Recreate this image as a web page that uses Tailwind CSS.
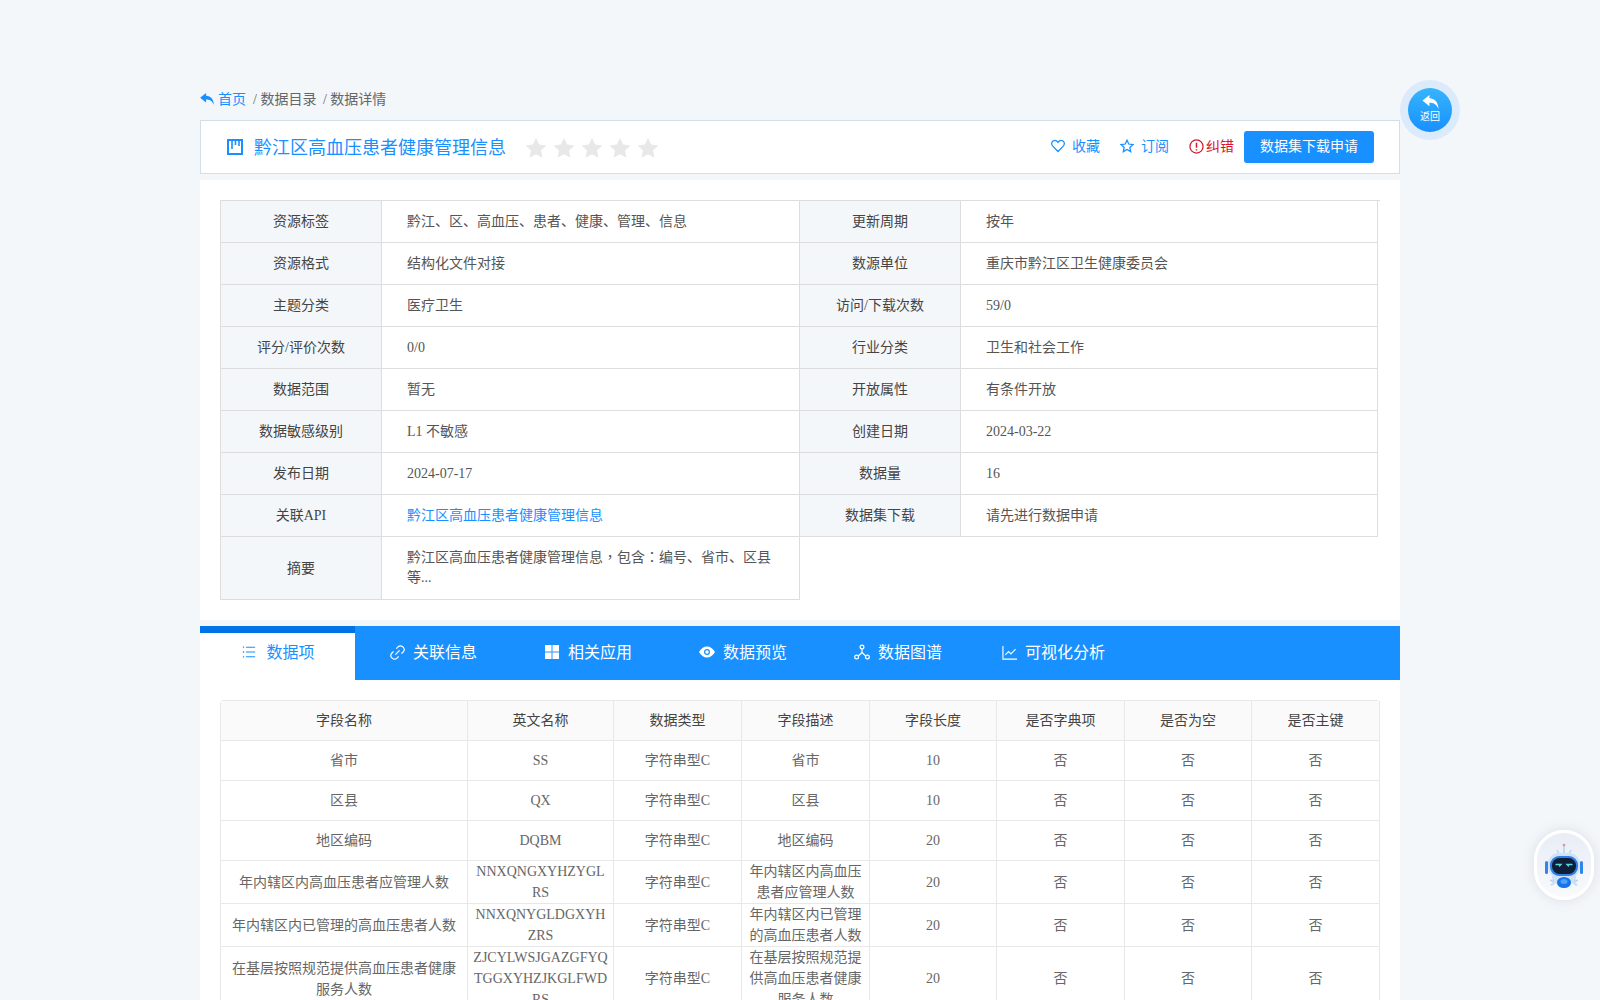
<!DOCTYPE html>
<html lang="zh-CN">
<head>
  <meta charset="UTF-8" />
  <title>数据详情</title>
  <script src="https://cdn.jsdelivr.net/npm/@tailwindcss/browser@4"></script>
</head>
<body class="h-screen overflow-hidden bg-[#f4f7fa] text-sm text-[#555] font-['Liberation_Serif','Noto_Sans_CJK_SC',serif]">
  <div class="w-[1200px] mx-auto pt-[89px]">

    <!-- breadcrumb -->
    <div class="h-[21px] leading-[21px] flex items-center text-[#666]">
      <svg class="w-[14px] h-[12px] text-[#1890ff] -mt-[2px]" viewBox="0 0 23 20" fill="currentColor"><path d="M10 0 0 8l10 8v-5c5.500 0 9.800 1.500 13 9-.3-9.500-5-15-13-15.500z"/></svg>
      <span class="text-[#1890ff] ml-[4px]">首页</span>
      <span class="ml-[7px]">/ 数据目录</span>
      <span class="ml-[6.500px]">/ 数据详情</span>
    </div>

    <!-- title bar -->
    <div class="mt-[10px] h-[54px] bg-white border border-[#d3deeb] flex items-center pl-[26px] pr-[25px]">
      <svg class="w-[16px] h-[16px] text-[#1890ff]" viewBox="0 0 16 16" fill="none" stroke="currentColor" stroke-width="2"><rect x="1" y="1" width="14" height="14"/><path d="M5 1v9M8.500 1v5M12 1v6" stroke-width="1.600"/></svg>
      <h1 class="ml-[11px] pt-[3px] text-[18px] text-[#1890ff] font-normal">黔江区高血压患者健康管理信息</h1>
      <div class="ml-[19px] pt-[2px] flex gap-[6px] text-[#e8e8e8]">
        <svg class="w-[22px] h-[22px]" viewBox="0 0 24 24" fill="currentColor"><path d="m12 1 3.400 7.300 7.900 1-5.800 5.500 1.500 7.900-7-3.900-7 3.900 1.500-7.900L.7 9.300l7.900-1z"/></svg>
        <svg class="w-[22px] h-[22px]" viewBox="0 0 24 24" fill="currentColor"><path d="m12 1 3.400 7.300 7.900 1-5.800 5.500 1.500 7.900-7-3.900-7 3.900 1.500-7.900L.7 9.300l7.900-1z"/></svg>
        <svg class="w-[22px] h-[22px]" viewBox="0 0 24 24" fill="currentColor"><path d="m12 1 3.400 7.300 7.900 1-5.800 5.500 1.500 7.900-7-3.900-7 3.900 1.500-7.900L.7 9.300l7.900-1z"/></svg>
        <svg class="w-[22px] h-[22px]" viewBox="0 0 24 24" fill="currentColor"><path d="m12 1 3.400 7.300 7.900 1-5.800 5.500 1.500 7.900-7-3.900-7 3.900 1.500-7.900L.7 9.300l7.900-1z"/></svg>
        <svg class="w-[22px] h-[22px]" viewBox="0 0 24 24" fill="currentColor"><path d="m12 1 3.400 7.300 7.900 1-5.800 5.500 1.500 7.900-7-3.900-7 3.900 1.500-7.900L.7 9.300l7.900-1z"/></svg>
      </div>
      <div class="ml-auto flex items-center text-[#1890ff]">
        <svg class="w-[14px] h-[14px] -mt-[2px]" viewBox="0 0 24 24" fill="none" stroke="currentColor" stroke-width="2.200"><path d="M12 21.500 3 12.300C.2 9.300.7 5.300 3.300 3.500c2.800-1.900 6.500-1 8.700 2.200 2.200-3.200 5.900-4.100 8.700-2.200 2.600 1.800 3.100 5.800.3 8.800z"/></svg>
        <span class="ml-[7px]">收藏</span>
        <svg class="w-[14px] h-[14px] ml-[20px] -mt-[2px]" viewBox="0 0 24 24" fill="none" stroke="currentColor" stroke-width="2.200"><path d="m12 2 3 6.600 7.200.9-5.300 5 1.400 7.200-6.300-3.600-6.300 3.600 1.400-7.200-5.300-5 7.200-.9z"/></svg>
        <span class="ml-[7px]">订阅</span>
        <svg class="w-[15px] h-[15px] ml-[20px] -mt-[2px] text-[#d9122d]" viewBox="0 0 24 24" fill="none" stroke="currentColor" stroke-width="2"><circle cx="12" cy="12" r="10.500"/><path d="M12 6v8M12 16.500v2" stroke-width="2.400"/></svg>
        <span class="ml-[2px] text-[#d9122d]">纠错</span>
        <button class="ml-[10px] w-[130px] h-[32px] rounded-[3px] bg-[#1890ff] text-white shadow-[0_2px_0_rgba(0,0,0,0.04)]">数据集下载申请</button>
      </div>
    </div>

    <!-- detail table -->
    <div class="mt-[6px] h-[440px] bg-white pt-[20px] pl-[20px]">
      <div class="w-[1160px] border-t border-[#ddd]">
        <table class="w-[1157px] table-fixed border-collapse [&_th]:pt-[2px] [&_td]:pt-[2px]">
          <colgroup>
            <col class="w-[161px]" /><col class="w-[418px]" /><col class="w-[161px]" /><col class="w-[417px]" />
          </colgroup>
          <tbody>
            <tr class="h-[41px]">
              <th class="border-x border-b border-[#ddd] bg-[#f4f7fa] font-normal text-[#444]">资源标签</th>
              <td class="border-x border-b border-[#ddd] pl-[25px]">黔江、区、高血压、患者、健康、管理、信息</td>
              <th class="border-x border-b border-[#ddd] bg-[#f4f7fa] font-normal text-[#444]">更新周期</th>
              <td class="border-x border-b border-[#ddd] pl-[25px]">按年</td>
            </tr>
            <tr class="h-[42px]">
              <th class="border-x border-b border-[#ddd] bg-[#f4f7fa] font-normal text-[#444]">资源格式</th>
              <td class="border-x border-b border-[#ddd] pl-[25px]">结构化文件对接</td>
              <th class="border-x border-b border-[#ddd] bg-[#f4f7fa] font-normal text-[#444]">数源单位</th>
              <td class="border-x border-b border-[#ddd] pl-[25px]">重庆市黔江区卫生健康委员会</td>
            </tr>
            <tr class="h-[42px]">
              <th class="border-x border-b border-[#ddd] bg-[#f4f7fa] font-normal text-[#444]">主题分类</th>
              <td class="border-x border-b border-[#ddd] pl-[25px]">医疗卫生</td>
              <th class="border-x border-b border-[#ddd] bg-[#f4f7fa] font-normal text-[#444]">访问/下载次数</th>
              <td class="border-x border-b border-[#ddd] pl-[25px]">59/0</td>
            </tr>
            <tr class="h-[42px]">
              <th class="border-x border-b border-[#ddd] bg-[#f4f7fa] font-normal text-[#444]">评分/评价次数</th>
              <td class="border-x border-b border-[#ddd] pl-[25px]">0/0</td>
              <th class="border-x border-b border-[#ddd] bg-[#f4f7fa] font-normal text-[#444]">行业分类</th>
              <td class="border-x border-b border-[#ddd] pl-[25px]">卫生和社会工作</td>
            </tr>
            <tr class="h-[42px]">
              <th class="border-x border-b border-[#ddd] bg-[#f4f7fa] font-normal text-[#444]">数据范围</th>
              <td class="border-x border-b border-[#ddd] pl-[25px]">暂无</td>
              <th class="border-x border-b border-[#ddd] bg-[#f4f7fa] font-normal text-[#444]">开放属性</th>
              <td class="border-x border-b border-[#ddd] pl-[25px]">有条件开放</td>
            </tr>
            <tr class="h-[42px]">
              <th class="border-x border-b border-[#ddd] bg-[#f4f7fa] font-normal text-[#444]">数据敏感级别</th>
              <td class="border-x border-b border-[#ddd] pl-[25px]">L1 不敏感</td>
              <th class="border-x border-b border-[#ddd] bg-[#f4f7fa] font-normal text-[#444]">创建日期</th>
              <td class="border-x border-b border-[#ddd] pl-[25px]">2024-03-22</td>
            </tr>
            <tr class="h-[42px]">
              <th class="border-x border-b border-[#ddd] bg-[#f4f7fa] font-normal text-[#444]">发布日期</th>
              <td class="border-x border-b border-[#ddd] pl-[25px]">2024-07-17</td>
              <th class="border-x border-b border-[#ddd] bg-[#f4f7fa] font-normal text-[#444]">数据量</th>
              <td class="border-x border-b border-[#ddd] pl-[25px]">16</td>
            </tr>
            <tr class="h-[42px]">
              <th class="border-x border-b border-[#ddd] bg-[#f4f7fa] font-normal text-[#444]">关联API</th>
              <td class="border-x border-b border-[#ddd] pl-[25px] text-[#1890ff]">黔江区高血压患者健康管理信息</td>
              <th class="border-x border-b border-[#ddd] bg-[#f4f7fa] font-normal text-[#444]">数据集下载</th>
              <td class="border-x border-b border-[#ddd] pl-[25px]">请先进行数据申请</td>
            </tr>
            <tr class="h-[63px]">
              <th class="border-x border-b border-[#ddd] bg-[#f4f7fa] font-normal text-[#444]">摘要</th>
              <td class="border-x border-b border-[#ddd] pl-[25px] pr-[20px] !pt-0 !pb-[2px]">黔江区高血压患者健康管理信息<span lang="zh-TW" class="font-['Noto_Sans_CJK_TC']">，</span>包含<span lang="zh-TW" class="font-['Noto_Sans_CJK_TC']">：</span>编号、省市、区县等...</td>
              <td colspan="2"></td>
            </tr>
          </tbody>
        </table>
      </div>
    </div>

    <!-- tabs -->
    <div class="mt-[6px] h-[54px] bg-[#1890ff] flex items-center text-base text-white">
      <div class="w-[155px] h-full border-t-[7px] border-[#0073e6] bg-white text-[#1890ff] flex items-center justify-center gap-[10px] pl-[2px] pb-[7px]">
        <svg class="w-[14px] h-[14px] -mt-[2px]" viewBox="0 0 16 16" fill="none" stroke="currentColor" stroke-width="1.200"><path d="M4.500 2.500H15M4.500 8H15M4.500 13.500H15"/><path d="M1 2.500h1.500M1 8h1.500M1 13.500h1.500" stroke-width="1.500"/></svg>
        <span>数据项</span>
      </div>
      <div class="ml-[35px] flex items-center gap-[8px]">
        <svg class="w-[15px] h-[15px] -mt-[2px]" viewBox="0 0 16 16" fill="none" stroke="currentColor" stroke-width="1.300"><path d="m6.800 3.800 2-2a3.200 3.200 0 0 1 4.600 0l.8.800a3.200 3.200 0 0 1 0 4.600l-2 2M9.200 12.200l-2 2a3.200 3.200 0 0 1-4.600 0l-.8-.8a3.200 3.200 0 0 1 0-4.600l2-2M5.800 10.200l4.400-4.400"/></svg>
        <span>关联信息</span>
      </div>
      <div class="ml-[68px] flex items-center gap-[9px]">
        <svg class="w-[14px] h-[14px] -mt-[2px]" viewBox="0 0 15 15" fill="currentColor"><rect width="7" height="7"/><rect x="8" width="7" height="7"/><rect y="8" width="7" height="7"/><rect x="8" y="8" width="7" height="7"/></svg>
        <span>相关应用</span>
      </div>
      <div class="ml-[67px] flex items-center gap-[8px]">
        <svg class="w-[16px] h-[16px] -mt-[2px]" viewBox="0 0 16 16" fill="currentColor"><path fill-rule="evenodd" d="M8 2.500c3.300 0 6 2 8 5.500-2 3.500-4.700 5.500-8 5.500S2 11.500 0 8c2-3.500 4.700-5.500 8-5.500zM8 5a3 3 0 1 0 0 6 3 3 0 0 0 0-6z"/><circle cx="8" cy="8" r="1.800"/></svg>
        <span>数据预览</span>
      </div>
      <div class="ml-[67px] flex items-center gap-[8px]">
        <svg class="w-[16px] h-[16px] -mt-[2px]" viewBox="0 0 16 16" fill="none" stroke="currentColor" stroke-width="1.200"><circle cx="8" cy="3" r="1.900"/><circle cx="2.600" cy="13" r="1.900"/><circle cx="13.400" cy="13" r="1.900"/><path d="M8 5v3.500M8 8.500 4.300 12M8 8.500l3.700 3.500"/></svg>
        <span>数据图谱</span>
      </div>
      <div class="ml-[60px] flex items-center gap-[8px]">
        <svg class="w-[15px] h-[15px] -mt-[2px]" viewBox="0 0 16 16" fill="none" stroke="currentColor" stroke-width="1.200"><path d="M1 1v14h15"/><path d="m3.500 10.500 3.500-3.500 2.500 2.500 5-5"/></svg>
        <span>可视化分析</span>
      </div>
    </div>

    <!-- field table -->
    <div class="bg-white h-[400px] pt-[20px] pl-[20px]">
      <table class="w-[1159px] table-fixed border-separate border-spacing-0 rounded-t-[4px] border-t border-l border-[#e8e8e8] text-center text-[#666] leading-[21px]">
        <colgroup>
          <col class="w-[247px]" /><col class="w-[146px]" /><col class="w-[128px]" /><col class="w-[128px]" /><col class="w-[127px]" /><col class="w-[128px]" /><col class="w-[127px]" /><col class="w-[128px]" />
        </colgroup>
        <thead>
          <tr class="h-[40px] bg-[#fafafa] text-[#444]">
            <th class="border-r border-b border-[#e8e8e8] font-normal">字段名称</th>
            <th class="border-r border-b border-[#e8e8e8] font-normal">英文名称</th>
            <th class="border-r border-b border-[#e8e8e8] font-normal">数据类型</th>
            <th class="border-r border-b border-[#e8e8e8] font-normal">字段描述</th>
            <th class="border-r border-b border-[#e8e8e8] font-normal">字段长度</th>
            <th class="border-r border-b border-[#e8e8e8] font-normal">是否字典项</th>
            <th class="border-r border-b border-[#e8e8e8] font-normal">是否为空</th>
            <th class="border-r border-b border-[#e8e8e8] font-normal">是否主键</th>
          </tr>
        </thead>
        <tbody>
          <tr class="h-[40px]">
            <td class="border-r border-b border-[#e8e8e8] px-[8px] break-all">省市</td>
            <td class="border-r border-b border-[#e8e8e8] px-[4.500px] break-all">SS</td>
            <td class="border-r border-b border-[#e8e8e8] px-[7px]">字符串型C</td>
            <td class="border-r border-b border-[#e8e8e8] px-[7px] break-all">省市</td>
            <td class="border-r border-b border-[#e8e8e8]">10</td>
            <td class="border-r border-b border-[#e8e8e8]">否</td>
            <td class="border-r border-b border-[#e8e8e8]">否</td>
            <td class="border-r border-b border-[#e8e8e8]">否</td>
          </tr>
          <tr class="h-[40px]">
            <td class="border-r border-b border-[#e8e8e8] px-[8px] break-all">区县</td>
            <td class="border-r border-b border-[#e8e8e8] px-[4.500px] break-all">QX</td>
            <td class="border-r border-b border-[#e8e8e8] px-[7px]">字符串型C</td>
            <td class="border-r border-b border-[#e8e8e8] px-[7px] break-all">区县</td>
            <td class="border-r border-b border-[#e8e8e8]">10</td>
            <td class="border-r border-b border-[#e8e8e8]">否</td>
            <td class="border-r border-b border-[#e8e8e8]">否</td>
            <td class="border-r border-b border-[#e8e8e8]">否</td>
          </tr>
          <tr class="h-[40px]">
            <td class="border-r border-b border-[#e8e8e8] px-[8px] break-all">地区编码</td>
            <td class="border-r border-b border-[#e8e8e8] px-[4.500px] break-all">DQBM</td>
            <td class="border-r border-b border-[#e8e8e8] px-[7px]">字符串型C</td>
            <td class="border-r border-b border-[#e8e8e8] px-[7px] break-all">地区编码</td>
            <td class="border-r border-b border-[#e8e8e8]">20</td>
            <td class="border-r border-b border-[#e8e8e8]">否</td>
            <td class="border-r border-b border-[#e8e8e8]">否</td>
            <td class="border-r border-b border-[#e8e8e8]">否</td>
          </tr>
          <tr class="h-[40px]">
            <td class="border-r border-b border-[#e8e8e8] px-[8px] break-all">年内辖区内高血压患者应管理人数</td>
            <td class="border-r border-b border-[#e8e8e8] px-[4.500px] break-all">NNXQNGXYHZYGLRS</td>
            <td class="border-r border-b border-[#e8e8e8] px-[7px]">字符串型C</td>
            <td class="border-r border-b border-[#e8e8e8] px-[7px] break-all">年内辖区内高血压患者应管理人数</td>
            <td class="border-r border-b border-[#e8e8e8]">20</td>
            <td class="border-r border-b border-[#e8e8e8]">否</td>
            <td class="border-r border-b border-[#e8e8e8]">否</td>
            <td class="border-r border-b border-[#e8e8e8]">否</td>
          </tr>
          <tr class="h-[40px]">
            <td class="border-r border-b border-[#e8e8e8] px-[8px] break-all">年内辖区内已管理的高血压患者人数</td>
            <td class="border-r border-b border-[#e8e8e8] px-[4.500px] break-all">NNXQNYGLDGXYHZRS</td>
            <td class="border-r border-b border-[#e8e8e8] px-[7px]">字符串型C</td>
            <td class="border-r border-b border-[#e8e8e8] px-[7px] break-all">年内辖区内已管理的高血压患者人数</td>
            <td class="border-r border-b border-[#e8e8e8]">20</td>
            <td class="border-r border-b border-[#e8e8e8]">否</td>
            <td class="border-r border-b border-[#e8e8e8]">否</td>
            <td class="border-r border-b border-[#e8e8e8]">否</td>
          </tr>
          <tr class="h-[40px]">
            <td class="border-r border-b border-[#e8e8e8] px-[8px] break-all">在基层按照规范提供高血压患者健康服务人数</td>
            <td class="border-r border-b border-[#e8e8e8] px-[4.500px] break-all">ZJCYLWSJGAZGFYQTGGXYHZJKGLFWDRS</td>
            <td class="border-r border-b border-[#e8e8e8] px-[7px]">字符串型C</td>
            <td class="border-r border-b border-[#e8e8e8] px-[7px] break-all">在基层按照规范提供高血压患者健康服务人数</td>
            <td class="border-r border-b border-[#e8e8e8]">20</td>
            <td class="border-r border-b border-[#e8e8e8]">否</td>
            <td class="border-r border-b border-[#e8e8e8]">否</td>
            <td class="border-r border-b border-[#e8e8e8]">否</td>
          </tr>
        </tbody>
      </table>
    </div>
  </div>

  <!-- floating back button -->
  <div class="fixed left-[1400px] top-[80px] w-[60px] h-[60px] rounded-full bg-[#dcebfb] flex items-center justify-center">
    <div class="w-[44px] h-[44px] rounded-full bg-gradient-to-b from-[#36b4fb] to-[#1890ff] flex flex-col items-center justify-center text-white">
      <svg class="w-[17px] h-[14px] -mt-[2px] mb-[1px]" viewBox="0 0 23 20" fill="currentColor"><path d="M10 0 0 8l10 8v-5c5.500 0 9.800 1.500 13 9-.3-9.500-5-15-13-15.500z"/></svg>
      <span class="text-[10px] leading-[13px]">返回</span>
    </div>
  </div>

  <!-- floating assistant -->
  <div class="fixed left-[1534px] top-[830px] w-[60px] h-[70px] rounded-[30px] border-[3px] border-white bg-gradient-to-b from-[#e8edf6] to-[#f8fafc] shadow-[0_0_14px_rgba(30,60,110,0.12)] flex items-center justify-center">
    <svg class="w-[40px] h-[46px]" viewBox="0 0 40 46" fill="none">
      <circle cx="20" cy="3" r="1.300" fill="#e58f8f"/>
      <path d="M20 4v7M13 8l2 4M27 8l-2 4" stroke="#9cc4ee" stroke-width="1"/>
      <rect x="1" y="19" width="3" height="13" rx="1.500" fill="#2f86ea"/>
      <rect x="36" y="19" width="3" height="13" rx="1.500" fill="#2f86ea"/>
      <path d="M8 30c3 8 21 8 24 0v9c-2 5-22 5-24 0z" fill="#cfe2f8"/>
      <rect x="4" y="11" width="32" height="25" rx="11" fill="#cfe3f9"/>
      <rect x="6" y="14" width="28" height="20" rx="9" fill="#2f7fe6"/>
      <rect x="8" y="16" width="24" height="16" rx="7.500" fill="#0f1f3a"/>
      <path d="M12 22.500h5l-1.500 1.500M28 22.500h-5l1.500 1.500" stroke="#5fd6de" stroke-width="1.300" stroke-linecap="round"/>
      <path d="M6 38l4 2M34 38l-4 2M7 43l3-1.500M33 43l-3-1.500" stroke="#bcd6f2" stroke-width="1.500"/>
      <ellipse cx="20" cy="40.500" rx="7" ry="5.500" fill="#1a73ea"/>
      <ellipse cx="20" cy="39.500" rx="3.500" ry="2.500" fill="#4da3f5"/>
    </svg>
  </div>
</body>
</html>
